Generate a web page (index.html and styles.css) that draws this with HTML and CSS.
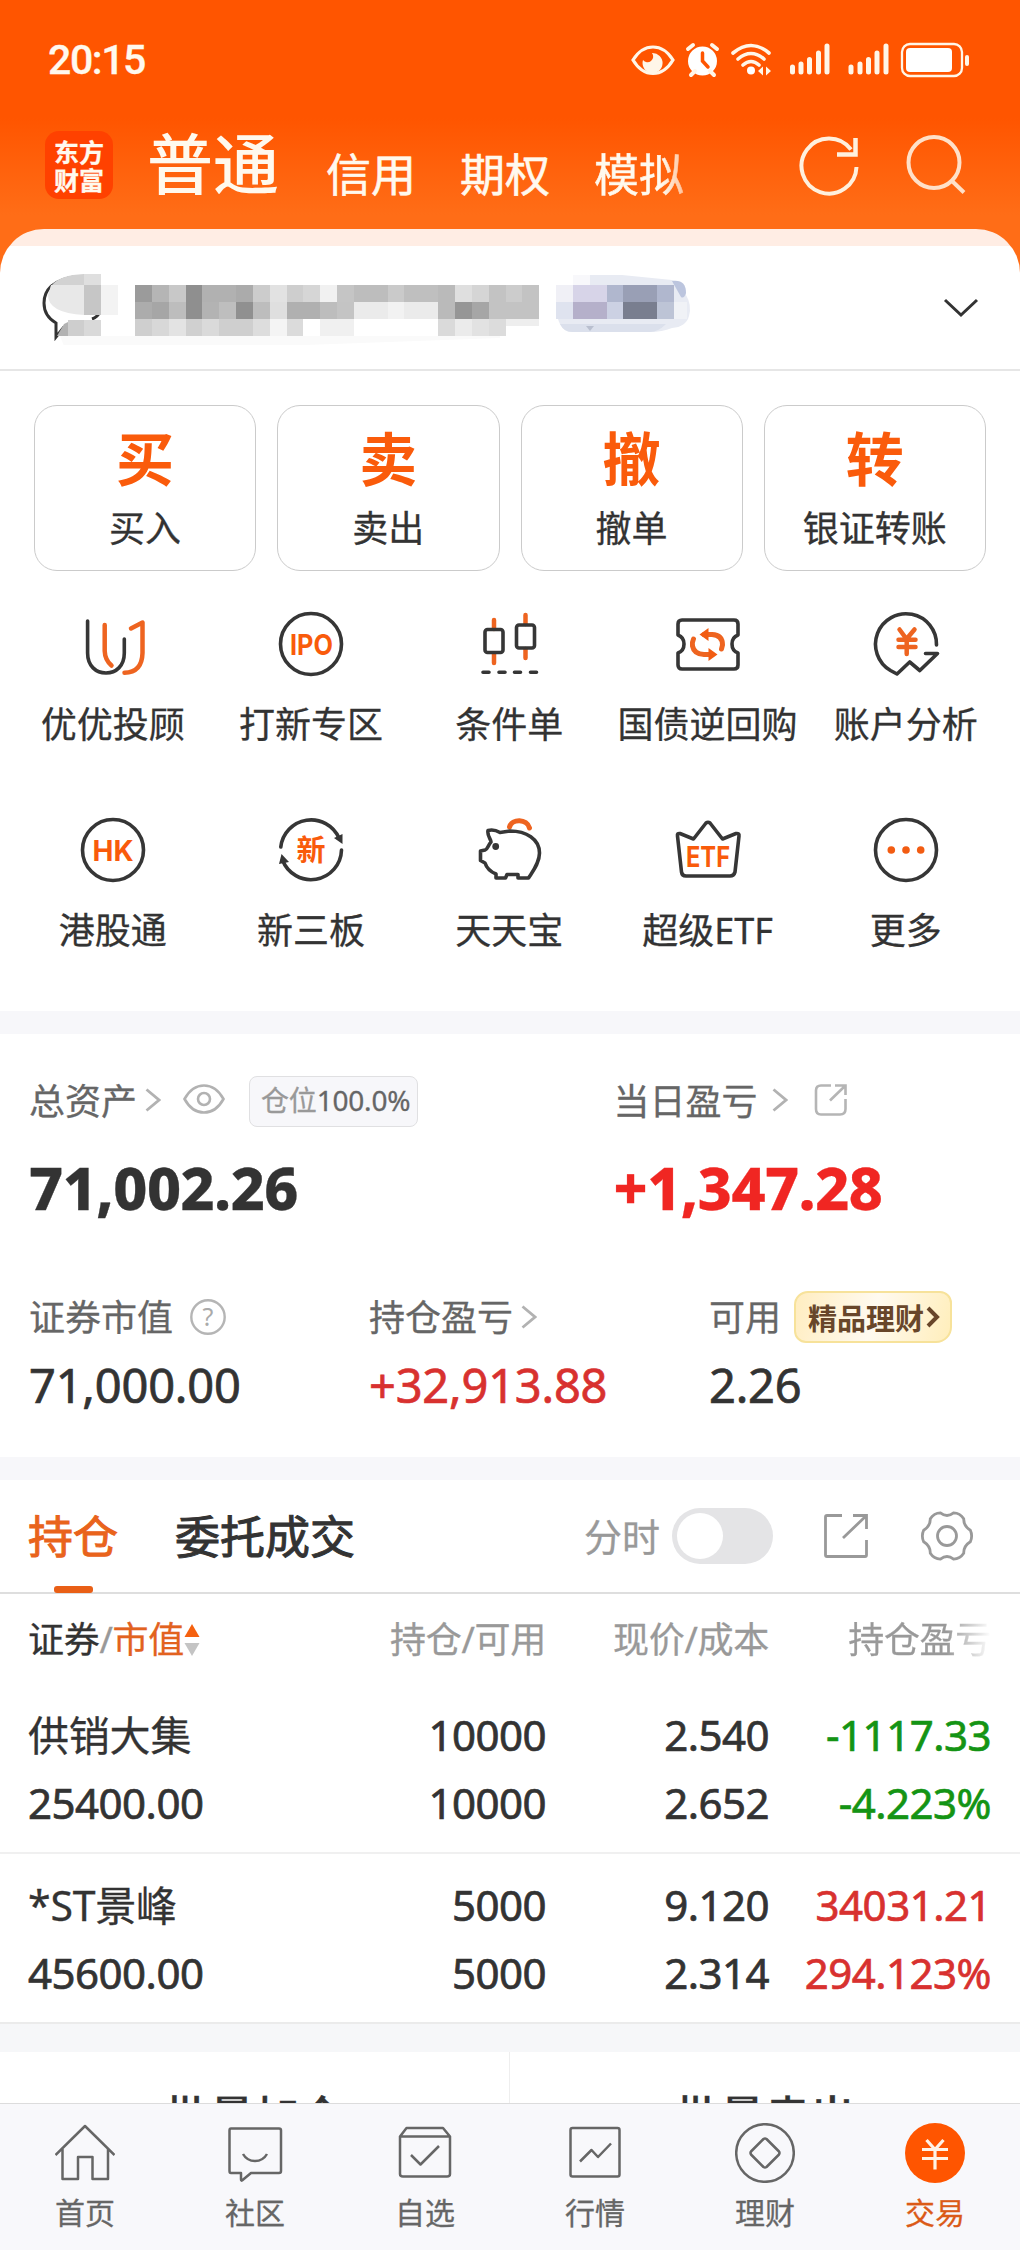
FILE: index.html
```html
<!DOCTYPE html>
<html lang="zh-CN">
<head>
<meta charset="utf-8">
<title>交易</title>
<link rel="stylesheet" href="styles.css">
</head>
<body>
<div class="app">
  <header class="top">
    <div class="status">
      <span class="time">20:15</span>
      <svg class="status-icons" width="340" height="36" viewBox="0 0 340 36" fill="none" stroke="#fff6e8">
        <path d="M4 18Q12 5 24 5T44 18Q36 31.500 24 31.500T4 18Z" stroke-width="3.200"/>
        <path d="M23 11A10 10 0 1 1 14 18A5.500 5.500 0 1 0 23 11Z" fill="#fff6e8" stroke="none"/>
        <circle cx="73.500" cy="19" r="14.500" fill="#fff" stroke="none"/>
        <path d="M59 7L64 3M83 3L88 7M62 33L66 29M85 33L81 29" stroke-width="4" stroke-linecap="round"/>
        <path d="M73.500 11V19L79 25" stroke="#ff5500" stroke-width="3.500" stroke-linecap="round"/>
        <path d="M104 11Q122 -4 140 11M109 17Q122 6 135 17M114 23Q122 16 130 23" stroke-width="3.600" stroke-linecap="round"/>
        <circle cx="122" cy="28.500" r="4" fill="#fff" stroke="none"/>
        <path d="M129 29L134 24.500V33.500ZM142 29L137 24.500V33.500Z" fill="#fff6e8" stroke="none"/>
        <path d="M163.500 25V30M172 22V30M180.500 17.500V30M189.500 11V30M198 4V30M222 25V30M231 22V30M239.500 17.500V30M248 11V30M257 4V30" stroke-width="5" stroke-linecap="round"/>
        <rect x="273" y="2" width="60" height="32" rx="8" stroke-width="2.300"/>
        <rect x="277" y="6" width="46" height="24" rx="4" fill="#fff" stroke="none"/>
        <path d="M338 15V22" stroke-width="4" stroke-linecap="round"/>
      </svg>
    </div>
    <nav class="accounts">
      <div class="logo"><span>东方</span><span>财富</span></div>
      <span class="acc-main">普通</span>
      <span class="acc">信用</span>
      <span class="acc">期权</span>
      <span class="acc fade">模拟</span>
      <svg class="top-actions" width="170" height="64" viewBox="0 0 170 64" fill="none" stroke-width="4">
        <path d="M58.500 34A27.500 27.500 0 1 1 53 16.500" stroke="#fff0dd"/>
        <path d="M57.500 5V21.500H39" stroke="#fff0dd" stroke-width="4.500"/>
        <circle cx="136" cy="29.500" r="25.500" stroke="#ffe0c8"/>
        <path d="M153.500 47.500L166 59.500" stroke="#ffe0c8"/>
      </svg>
    </nav>
  </header>

  <main class="panel">
    <section class="account">
      <svg width="660" height="74" viewBox="40 272 660 74">
        <path d="M78 277.500C52 280 44 292 44 304C44 314 49 320 56 324V338L64 328M92 320Q98 318 100 312" fill="none" stroke="#333" stroke-width="3"/>
        <path d="M60 337H500V339L250 348L66 352Z" fill="#fafafa"/>
        <path d="M52 286Q60 276 84 275V286Z" fill="#d2d2d2"/><rect x="84" y="275" width="17" height="11" fill="#dfdfdf"/>
        <path d="M51 286H84V316Q48 314 48 296Z" fill="#e8e8e8"/><rect x="84" y="286" width="17" height="30" fill="#c6c6c6"/>
        <rect x="101" y="286" width="17" height="30" fill="#f3f3f3"/>
        <path d="M57 337L64 325L72 321V337Z" fill="#b2b2b2"/><rect x="68" y="321" width="16" height="16" fill="#cecece"/><rect x="84" y="321" width="17" height="16" fill="#d9d9d9"/>
        <g shape-rendering="crispEdges">
          <path d="M135 286h17v17h-17z" fill="#9b9b9b"/><path d="M152 286h17v17h-17z" fill="#b5b5b5"/><path d="M169 286h17v17h-17z" fill="#c8c8c8"/><path d="M186 286h16v34h-16z" fill="#8f8f8f"/><path d="M202 286h34v17h-34z" fill="#b1b1b1"/><path d="M236 286h17v17h-17z" fill="#ababab"/><path d="M253 286h17v17h-17z" fill="#cccccc"/><path d="M270 286h17v17h-17z" fill="#e2e2e2"/><path d="M287 286h16v17h-16z" fill="#cecece"/><path d="M303 286h17v17h-17z" fill="#d6d6d6"/><path d="M320 286h17v17h-17z" fill="#f1f1f1"/><path d="M337 286h17v17h-17z" fill="#c5c5c5"/><path d="M354 286h34v17h-34z" fill="#bdbdbd"/><path d="M388 286h16v17h-16z" fill="#cacaca"/><path d="M404 286h34v17h-34z" fill="#bfbfbf"/><path d="M438 286h17v34h-17z" fill="#bababa"/><path d="M455 286h17v17h-17z" fill="#dfdfdf"/><path d="M472 286h17v17h-17z" fill="#d5d5d5"/><path d="M489 286h50v34h-50z" fill="#c3c3c3"/><path d="M506 286h16v17h-16z" fill="#cccccc"/>
          <path d="M135 303h17v17h-17z" fill="#acacac"/><path d="M152 303h17v17h-17z" fill="#a6a6a6"/><path d="M169 303h17v17h-17z" fill="#bdbdbd"/><path d="M202 303h17v17h-17z" fill="#b3b3b3"/><path d="M219 303h17v17h-17z" fill="#bebebe"/><path d="M236 303h17v17h-17z" fill="#909090"/><path d="M253 303h17v17h-17z" fill="#bdbdbd"/><path d="M270 303h17v17h-17z" fill="#dfdfdf"/><path d="M287 303h33v17h-33z" fill="#b0b0b0"/><path d="M320 303h17v17h-17z" fill="#bdbdbd"/><path d="M337 303h17v17h-17z" fill="#c4c4c4"/><path d="M354 303h84v17h-84z" fill="#ebebeb"/><path d="M388 303h16v17h-16z" fill="#f2f2f2"/><path d="M455 303h17v17h-17z" fill="#969696"/><path d="M472 303h17v17h-17z" fill="#a6a6a6"/>
          <path d="M135 320h17v17h-17z" fill="#cfcfcf"/><path d="M152 320h17v17h-17z" fill="#d8d8d8"/><path d="M169 320h17v17h-17z" fill="#e3e3e3"/><path d="M186 320h16v17h-16z" fill="#d0d0d0"/><path d="M202 320h17v17h-17z" fill="#dadada"/><path d="M219 320h34v17h-34z" fill="#cfcfcf"/><path d="M253 320h17v17h-17z" fill="#dddddd"/><path d="M270 320h17v17h-17z" fill="#f4f4f4"/><path d="M287 320h16v17h-16z" fill="#dbdbdb"/><path d="M320 320h34v17h-34z" fill="#f0f0f0"/><path d="M438 320h17v17h-17z" fill="#dadada"/><path d="M455 320h17v17h-17z" fill="#ebebeb"/><path d="M472 320h17v17h-17z" fill="#e2e2e2"/><path d="M489 320h17v17h-17z" fill="#dcdcdc"/><path d="M506 320h33v7h-33z" fill="#eeeeee"/>
        </g>
        <path d="M573 276H622L672 281Q686 284 686 296Q692 306 689 317Q686 328 672 329Q662 333 650 333H572Q562 333 558 320L556 300V286H573Z" fill="#e8ebf3"/>
        <path d="M672 282Q686 280 686 294Q684 300 681 298Z" fill="#bcc5de"/>
        <path d="M560 325H666Q658 333 650 333H572Q564 333 560 325Z" fill="#dbe0ec"/>
        <path d="M586 327H594L590 332Z" fill="#b9bfcf"/>
        <g shape-rendering="crispEdges">
          <path d="M573 276h17v10h-17z" fill="#f8f8fb"/>
          <path d="M556 286h17v17h-17z" fill="#f0f0f6"/><path d="M573 286h34v17h-34z" fill="#d7d4e8"/><path d="M607 286h16v17h-16z" fill="#b0b7ce"/><path d="M623 286h34v17h-34z" fill="#999fb5"/><path d="M657 286h17v17h-17z" fill="#b0b7ce"/>
          <path d="M556 303h17v17h-17z" fill="#dfe3ef"/><path d="M573 303h34v17h-34z" fill="#b5b0ca"/><path d="M607 303h16v17h-16z" fill="#ccd1e3"/><path d="M623 303h34v17h-34z" fill="#797e8f"/><path d="M657 303h17v17h-17z" fill="#bdc4d6"/><path d="M674 303h13v17h-13z" fill="#f0f2f6"/>
        </g>
      </svg>
      <svg class="down" width="36" height="20" viewBox="0 0 36 20"><path d="M2 2L18 17L34 2" fill="none" stroke="#333" stroke-width="3"/></svg>
    </section>

    <section class="quick">
      <div class="card"><b>买</b><span>买入</span></div>
      <div class="card"><b>卖</b><span>卖出</span></div>
      <div class="card"><b>撤</b><span>撤单</span></div>
      <div class="card"><b>转</b><span>银证转账</span></div>
    </section>

    <section class="services">
      <div class="svc">
        <svg class="ico" viewBox="0 0 66 66"><path d="M7.600 10V42C7.600 55 16 62 26 62S44.300 55 44.300 42V28"/><path class="o" d="M24.700 14V40Q25 49 31.500 54.500M51 17.500L62.500 11.500V42Q62 61.500 44.500 61.700"/></svg>
        <span>优优投顾</span></div>
      <div class="svc">
        <svg class="ico" viewBox="0 0 66 66"><circle cx="33" cy="33" r="30.500"/><text x="12" y="43.500" font-size="29" textLength="43" lengthAdjust="spacingAndGlyphs">IPO</text></svg>
        <span>打新专区</span></div>
      <div class="svc">
        <svg class="ico" viewBox="0 0 66 66"><path class="o" d="M18 9V18M18 43V52M49.500 4V13M49.500 38V47"/><rect x="9" y="18.500" width="18" height="23" rx="2.500"/><rect x="40.500" y="14" width="18" height="23" rx="2.500"/><path d="M7 61.300H13M23 61.300H29M38.500 61.300H44.500M54.500 61.300H60.500"/></svg>
        <span>条件单</span></div>
      <div class="svc">
        <svg class="ico" viewBox="0 0 66 66"><path d="M7 9H59Q63 9 63 13V24C55 27 55 39 63 42V54Q63 58 59 58H7Q3 58 3 54V42C11 39 11 27 3 24V13Q3 9 7 9Z"/><path class="o thick" d="M29 23.500H37Q47.500 24 47.500 34L46.500 38M18.500 28Q17 31 17.500 35Q19 43 29 43.500H35"/><path class="of" d="M24.500 23.500L33.500 17V30ZM42.500 43.500L33.500 37V50Z"/></svg>
        <span>国债逆回购</span></div>
      <div class="svc">
        <svg class="ico" viewBox="0 0 66 66"><path d="M63.500 34A30.500 30.500 0 1 0 17.500 59.500L24 63L36.700 51L46.800 59.500L64.500 42.500H52.500"/><path class="o" d="M26.500 18.500L33.500 28L41.500 18.500M25.500 28.700H42.500M25.500 36H42.500M33.700 28V43"/></svg>
        <span>账户分析</span></div>
      <div class="svc">
        <svg class="ico" viewBox="0 0 66 66"><circle cx="33" cy="33" r="30.500"/><text x="12.500" y="43.500" font-size="29" textLength="41" lengthAdjust="spacingAndGlyphs">HK</text></svg>
        <span>港股通</span></div>
      <div class="svc">
        <svg class="ico" viewBox="0 0 66 66"><path d="M2.800 30A30.500 30.500 0 0 1 61 21M63.500 33A30.500 30.500 0 0 1 4.500 43"/><path class="df" d="M56 21L64.500 17V27ZM1 47L3.500 37L11 45Z"/><text x="18.500" y="44" font-size="29">新</text></svg>
        <span>新三板</span></div>
      <div class="svc">
        <svg class="ico" viewBox="0 0 66 66"><path class="o thick" d="M33.500 10C36 1.500 51 1.500 53.500 11"/><path d="M12 13.500C11 19 15 22 15 25C12 28 12 32 9 33L4.500 34V43.500L9 46C11 52 15 55 20 57V61H29.500L31 57.500H42V61H52.500C57 54 63.500 46 63.500 36C63.500 22 50 14 34 14L24 15.500Q18 12 12 13.500Z"/><circle class="df" cx="19.700" cy="29.500" r="3.400"/></svg>
        <span>天天宝</span></div>
      <div class="svc">
        <svg class="ico" viewBox="0 0 66 66"><path d="M2.500 19Q2 16 5 16.500L18.500 22L31 6Q33 4.500 35 6L47.500 22L61 16.500Q64.500 16 64 19L60 55Q59 59 55 59H11Q7 59 6.500 55Z"/><text x="11" y="49.500" font-size="29" textLength="44" lengthAdjust="spacingAndGlyphs">ETF</text></svg>
        <span>超级ETF</span></div>
      <div class="svc">
        <svg class="ico" viewBox="0 0 66 66"><circle cx="33" cy="33" r="30.500"/><circle class="of" cx="18.300" cy="33" r="3.800"/><circle class="of" cx="33" cy="33" r="3.800"/><circle class="of" cx="47.700" cy="33" r="3.800"/></svg>
        <span>更多</span></div>
    </section>

    <div class="band"></div>

    <section class="assets">
      <div class="major">
        <div>
          <div class="label">总资产
            <svg class="chev total" width="16" height="24" viewBox="0 0 16 24"><path d="M1.500 1.500L14 12L1.500 22.500"/></svg>
            <svg class="eye" width="42" height="30" viewBox="0 0 42 30" fill="none" stroke="#b2b2b2" stroke-width="2.600"><path d="M1.500 15Q9 1.500 21 1.500T40.500 15Q33 28.500 21 28.500T1.500 15Z"/><circle cx="21" cy="15" r="6"/></svg>
            <span class="ratio">仓位<em>100.0%</em></span>
          </div>
          <div class="big">71,002.26</div>
        </div>
        <div>
          <div class="label">当日盈亏
            <svg class="chev day" width="16" height="24" viewBox="0 0 16 24"><path d="M1.500 1.500L14 12L1.500 22.500"/></svg>
            <svg class="share" width="34" height="34" viewBox="0 0 34 34" fill="none" stroke="#b5b5b5" stroke-width="2.600"><path d="M17 2.500H7Q2 2.500 2 7.500V26Q2 31.500 7 31.500H26Q31.500 31.500 31.500 26V16M21 2.500H31.500V12M31.500 2.500L16 17.500"/></svg>
          </div>
          <div class="big up">+1,347.28</div>
        </div>
      </div>
      <div class="minor">
        <div><div class="label">证券市值
          <svg class="help" width="38" height="38" viewBox="0 0 38 38"><circle cx="19" cy="19" r="16.700" fill="none" stroke="#b5b5b5" stroke-width="2.400"/><text x="19" y="28" font-size="25" text-anchor="middle" fill="#aaa">?</text></svg>
          </div><div class="val">71,000.00</div></div>
        <div><div class="label">持仓盈亏
          <svg class="chev hold" width="16" height="24" viewBox="0 0 16 24"><path d="M1.500 1.500L14 12L1.500 22.500"/></svg>
          </div><div class="val up2">+32,913.88</div></div>
        <div><div class="label">可用
          <span class="promo">精品理财<svg width="14" height="22" viewBox="0 0 14 22"><path d="M2 2L11 11L2 20" fill="none" stroke="#68462a" stroke-width="4"/></svg></span>
          </div><div class="val">2.26</div></div>
      </div>
    </section>

    <div class="band"></div>

    <section class="tabs">
      <span class="tab on">持仓</span>
      <span class="tab">委托成交</span>
      <span class="minute">分时</span>
      <span class="toggle"></span>
      <svg class="export" width="46" height="46" viewBox="0 0 46 46" fill="none" stroke="#999" stroke-width="2.800"><path d="M19 2.500H4Q2.500 2.500 2.500 4V42Q2.500 43.500 4 43.500H42Q43.500 43.500 43.500 42V27M30 2.500H43.500V16M43.500 2.500L20 25"/></svg>
      <svg class="gear" width="54" height="54" viewBox="-27 -27 54 54" fill="none" stroke="#999" stroke-width="2.800"><path d="M23.300 -5.800Q26 0 23.300 5.800Q16.500 10 16.700 17.300Q13 23 6.600 23.100Q0 18 -6.600 23.100Q-13 23 -16.700 17.300Q-16.500 10 -23.300 5.800Q-26 0 -23.300 -5.800Q-16.500 -10 -16.700 -17.300Q-13 -23 -6.600 -23.100Q0 -18 6.600 -23.100Q13 -23 16.700 -17.300Q16.500 -10 23.300 -5.800Z"/><circle r="9.500"/></svg>
    </section>

    <section class="table">
      <div class="row head">
        <span class="first"><b>证券</b>/<i>市值</i><svg width="16" height="34" viewBox="0 0 16 34"><path d="M8 1L15.500 14H.5Z" fill="#f5610f"/><path d="M.5 20H15.500L8 33Z" fill="#c4c4c4"/></svg></span>
        <span>持仓/可用</span><span>现价/成本</span><span class="cut">持仓盈亏</span>
      </div>
      <div class="holding">
        <div class="row"><span class="name">供销大集</span><span>10000</span><span>2.540</span><span class="down-c">-1117.33</span></div>
        <div class="row"><span>25400.00</span><span>10000</span><span>2.652</span><span class="down-c">-4.223%</span></div>
      </div>
      <div class="holding second">
        <div class="row"><span class="name">*ST景峰</span><span>5000</span><span>9.120</span><span class="up2">34031.21</span></div>
        <div class="row"><span>45600.00</span><span>5000</span><span>2.314</span><span class="up2">294.123%</span></div>
      </div>
    </section>

    <div class="band tall"></div>
    <section class="batch"><span>批量加仓</span><span>批量卖出</span></section>
  </main>

  <nav class="tabbar">
    <a><svg viewBox="0 0 60 60"><path d="M.5 32L30 3L59.500 32M7.500 26V56H23V34H37.500V56H53V26"/></svg>首页</a>
    <a><svg viewBox="0 0 60 60"><path d="M6 5.500H54Q56 5.500 56 7.500V48Q56 50 54 50H26L17 57.500Q16 58 16 56V50H6Q4.500 50 4.500 48V7.500Q4.500 5.500 6 5.500Z"/><path d="M18 31Q22 38 30 38T42 31"/></svg>社区</a>
    <a><svg viewBox="0 0 60 60"><path d="M5 13.500L11.500 5H48L55 13.500V51Q55 53.500 52 53.500H8Q5 53.500 5 51ZM5 13.500H55M16 32L25.500 41.500L44 23"/></svg>自选</a>
    <a><svg viewBox="0 0 60 60"><rect x="5.500" y="5" width="49" height="48.500" rx="2"/><path d="M15 38.500L26.500 27L33 34L46 20.500"/></svg>行情</a>
    <a><svg viewBox="0 0 60 60"><circle cx="30" cy="30" r="28.800"/><path d="M28.500 16L16 28.500Q15 30 16 31.500L28.500 44Q30 45 31.500 44L44 31.500Q45 30 44 28.500L31.500 16Q30 15 28.500 16Z"/></svg>理财</a>
    <a class="on"><svg viewBox="0 0 60 60"><circle cx="30" cy="30" r="30"/><path d="M21.500 17L30 26.500L38.500 17M17 26.500H43M17 35.500H43M30 26.500V46.500"/></svg>交易</a>
  </nav>
</div>
</body>
</html>
```
FILE: styles.css
```css
* { box-sizing: border-box; }
body {
  margin: 0;
  font-family: "Noto Sans", "Noto Sans CJK SC", sans-serif;
  color: #333;
  -webkit-text-stroke: 0.3px currentColor;
}
svg { display: block; flex: none; }
em, i { font-style: normal; }
.app {
  width: 1020px;
  height: 2250px;
  overflow: hidden;
  display: flex;
  flex-direction: column;
  background: linear-gradient(#ff5500 118px, #ff6d17 215px, #ff6d17 300px);
}
.top { height: 229px; flex: none; color: #fff9ee; }
.status {
  height: 118px;
  padding: 2px 50px 0 48px;
  display: flex;
  align-items: center;
  justify-content: space-between;
}
.time { font: 500 41px/60px Roboto, sans-serif; letter-spacing: -1.4px; }
.status-icons { margin-right: 1px; }
.accounts { display: flex; align-items: flex-start; padding: 13px 0 0 45px; }
.logo {
  width: 68px;
  height: 68px;
  border-radius: 14px;
  background: #ff4100;
  display: flex;
  flex-direction: column;
  align-items: center;
  justify-content: center;
  font: 700 25px/28px "Noto Sans CJK SC", sans-serif;
}
.acc-main { font-size: 66px; font-weight: 500; line-height: 66px; margin: -1px 0 0 34px; -webkit-text-stroke: 0; }
.acc { font-size: 45px; line-height: 60px; margin: 14px 0 0 44px; -webkit-text-stroke: 0.6px currentColor; }
.acc-main + .acc { margin-left: 47px; }
.acc.fade { background: linear-gradient(90deg, #fff9ee 75%, #ffc19a); background-clip: text; -webkit-background-clip: text; color: transparent; }
.top-actions { margin: 2px 0 0 114px; }

.panel {
  flex: 1;
  min-height: 0;
  overflow: hidden;
  border-radius: 44px 44px 0 0;
  background: linear-gradient(#ffede4 17px, #fff 17px);
}
.account {
  height: 142px;
  padding: 42px 41px 0 40px;
  border-bottom: 2px solid #e6e6e6;
  display: flex;
  justify-content: space-between;
}
.down { margin-top: 27px; }

.quick { display: grid; grid-template-columns: repeat(4, 1fr); gap: 21px; padding: 34px 34px 0; }
.card {
  height: 166px;
  border: 1px solid #cbcbcb;
  border-radius: 23px;
  display: flex;
  flex-direction: column;
  align-items: center;
  font-size: 36px;
}
.card b { font-size: 58px; line-height: 60px; color: #fa5b0b; margin-top: 23px; -webkit-text-stroke: 0; }
.card span { line-height: 40px; margin-top: 20px; }

.services { display: grid; grid-template-columns: repeat(5, 198.3px); padding: 40px 0 0 13.5px; height: 440px; grid-auto-rows: 206px; }
.svc { display: flex; flex-direction: column; align-items: center; font-size: 36px; white-space: nowrap; }
.svc span { line-height: 40px; margin-top: 28px; }
.ico { width: 66px; height: 66px; overflow: visible; fill: none; stroke: #363636; stroke-width: 3.600; stroke-linecap: round; stroke-linejoin: round; }
.ico .o { stroke: #ee6420; stroke-width: 4.500; }
.ico .thick { stroke-width: 5; }
.ico .of { fill: #f25c12; stroke: none; }
.ico .df { fill: #363636; stroke: none; }
.ico text { fill: #f95b0b; stroke: none; font-family: Inter, "Noto Sans CJK SC", sans-serif; font-weight: 700; }

.band { height: 23px; background: #f7f7fa; }
.assets { height: 423px; padding-left: 29px; }
.major { display: grid; grid-template-columns: 584.500px 1fr; padding-top: 37px; }
.label { display: flex; align-items: center; height: 56px; font-size: 36px; color: #666; white-space: nowrap; }
.chev { fill: none; stroke: #b2b2b2; stroke-width: 2.800; margin-top: 2px; }
.total { margin-left: 8px; }
.eye { margin-left: 22px; }
.ratio {
  margin: 5px 0 0 24px;
  height: 51px;
  width: 169px;
  padding-left: 11px;
  border: 1px solid #e0e0e2;
  border-radius: 8px;
  background: #f7f7fa;
  font-size: 28px;
  line-height: 47px;
  letter-spacing: -0.2px;
  color: #999;
}
.ratio em { color: #666; }
.day { margin-left: 14px; }
.share { margin: 2px 0 0 26px; }
.big { font-size: 59px; font-weight: 800; line-height: 70px; margin-top: 25px; letter-spacing: -0.45px; }
.up { color: #f02622; }
.up2 { color: #d8312f; }
.minor { display: grid; grid-template-columns: 340px 340px 1fr; margin-top: 65px; }
.help { margin: 3px 0 0 16px; }
.hold { margin-left: 8px; margin-top: 4px; }
.val { font-size: 47px; line-height: 60px; margin-top: 12px; letter-spacing: -0.2px; -webkit-text-stroke: 0.7px currentColor; }
.promo {
  margin: 4px 0 0 13px;
  width: 158px;
  height: 52px;
  display: flex;
  align-items: center;
  padding-left: 12px;
  border: 2px solid #f7e29a;
  border-radius: 14px 12px 16px 12px;
  background: linear-gradient(105deg, #ffedc0, #fffaf0 50%, #ffeebb);
  font-size: 29px;
  font-weight: 700;
  color: #68462a;
  -webkit-text-stroke: 0;
}
.promo svg { margin-left: 2px; }

.tabs {
  height: 114px;
  padding: 0 46px 0 28px;
  border-bottom: 2px solid #dedede;
  display: flex;
  align-items: center;
  font-size: 45px;
}
.tab { height: 114px; line-height: 116px; position: relative; -webkit-text-stroke: 1px currentColor; }
.tab + .tab { margin-left: 57px; }
.tab.on { color: #e9631c; }
.tab.on::after { content: ""; position: absolute; left: 26px; bottom: 0; width: 39px; height: 7px; border-radius: 3px; background: #e95f16; }
.minute { margin-left: auto; font-size: 38px; line-height: 50px; color: #999; }
.toggle { width: 101px; height: 56px; margin-left: 12px; border-radius: 28px; background: #e4e4e6; padding: 5px; }
.toggle::before { content: ""; display: block; width: 46px; height: 46px; border-radius: 50%; background: #fff; }
.export { margin-left: 50px; }
.gear { margin-left: 51px; }

.row { display: grid; grid-template-columns: 241px 277px 223px 222px; padding-left: 28px; font-size: 42px; line-height: 68px; white-space: nowrap; letter-spacing: -0.5px; }
.row > span { text-align: right; -webkit-text-stroke: 0.7px currentColor; }
.row > span:first-child { text-align: left; }
.head { height: 92px; font-size: 36px; line-height: 92px; color: #999; letter-spacing: -0.3px; }
.row.head > span { -webkit-text-stroke: 0.3px currentColor; }
.head .first { display: flex; align-items: center; }
.head b { font-weight: 400; color: #333; }
.head i { color: #e2621f; }
.head .cut { color: transparent; background: linear-gradient(90deg, #999 80%, #fff 100%); background-clip: text; -webkit-background-clip: text; }
.row .name { font-size: 41px; letter-spacing: -0.2px; -webkit-text-stroke: 0.3px currentColor; }
.holding { height: 168px; padding-top: 15px; border-bottom: 2px solid #f0f0f0; }
.holding.second { height: 170px; padding-top: 17px; border-color: #ebebeb; }
.down-c { color: #149414; }
.tall { height: 28px; background: #f6f7f9; }
.batch { display: grid; grid-template-columns: 1fr 1fr; font-size: 45px; font-weight: 500; line-height: 130px; text-align: center; }
.batch span:first-child { border-right: 1px solid #eee; }

.tabbar {
  height: 147px;
  flex: none;
  display: grid;
  grid-template-columns: repeat(6, 1fr);
  background: #f8f8fb;
  border-top: 1px solid #dcdcdc;
}
.tabbar a { display: flex; flex-direction: column; align-items: center; padding-top: 19px; font-size: 30px; line-height: 40px; color: #666; }
.tabbar svg { width: 60px; height: 60px; margin-bottom: 10px; fill: none; stroke: #666; stroke-width: 2.500; stroke-linejoin: round; }
.tabbar .on { color: #db5a17; }
.tabbar .on circle { fill: #ff5500; stroke: none; }
.tabbar .on path { stroke: #fff3e6; stroke-width: 3.200; }
```
